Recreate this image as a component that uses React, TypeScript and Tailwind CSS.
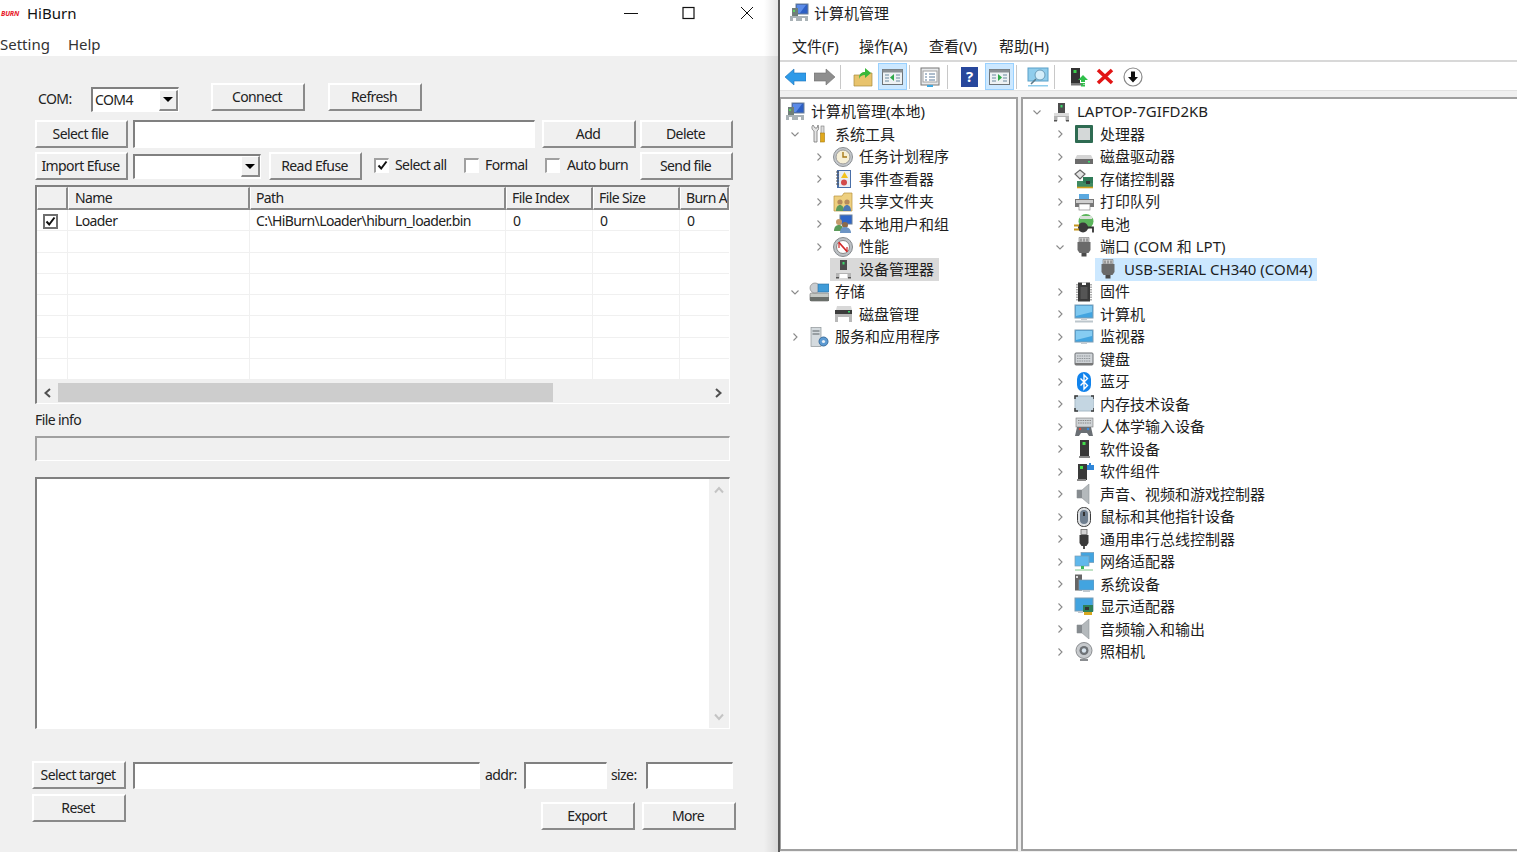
import { ReactNode } from "react";

function Btn({ className, children }: { className: string; children: ReactNode }) {
  return (
    <div
      className={`flex h-[28px] shrink-0 items-center justify-center border-t-2 border-l-2 border-b-2 border-r-2 border-t-white border-l-white border-b-[#8a8a8a] border-r-[#8a8a8a] bg-[#f0f0f0] pr-[2px] pb-[1px] ${className}`}
    >
      {children}
    </div>
  );
}

function Sunken({ className, children }: { className: string; children?: ReactNode }) {
  return (
    <div
      className={`shrink-0 border-t-2 border-l-2 border-b border-r border-t-[#808080] border-l-[#808080] border-b-white border-r-white ${className}`}
    >
      {children}
    </div>
  );
}

function Combo({ className, value }: { className: string; value?: string }) {
  return (
    <Sunken className={`flex h-[25px] items-center justify-between bg-white pl-[2px] ${className}`}>
      <span className="pb-[1px]">{value}</span>
      <div className="flex h-[21px] w-[19px] items-center justify-center border-t border-l border-b-2 border-r-2 border-t-white border-l-white border-b-[#8a8a8a] border-r-[#8a8a8a] bg-[#f0f0f0]">
        <div className="h-0 w-0 border-x-[5px] border-t-[5px] border-x-transparent border-t-black" />
      </div>
    </Sunken>
  );
}

function Check({ checked }: { checked?: boolean }) {
  return (
    <div className="mb-[2px] flex h-[15px] w-[15px] shrink-0 items-center justify-center border-t-2 border-l-2 border-b border-r border-t-[#a0a0a0] border-l-[#a0a0a0] border-b-white border-r-white bg-white">
      {checked && (
        <svg width="11" height="11" viewBox="0 0 11 11" fill="none" stroke="#111" strokeWidth="2">
          <path d="M1.5 5.5 4.2 8.5 9.5 1.5" />
        </svg>
      )}
    </div>
  );
}

const COLS = "grid grid-cols-[31px_182px_256px_87px_87px_49px]";

function FileTable() {
  return (
    <Sunken className="mt-[5px] ml-[35px] h-[219px] w-[695px] bg-[#f0f0f0]">
      <div className={COLS}>
        {["", "Name", "Path", "File Index", "File Size", "Burn A"].map((h, i) => (
          <div
            key={i}
            className={`flex h-[23px] items-center overflow-hidden border-t border-l border-b-2 border-r-2 border-t-[#f0f0f0] border-l-white border-b-[#8a8a8a] border-r-[#8a8a8a] whitespace-nowrap ${i > 1 ? "pl-[5px]" : "pl-[6px]"}`}
          >
            {h}
          </div>
        ))}
      </div>
      <div className="bg-white">
        <div className={`${COLS} h-[21.3px] border-b border-[#f0f0f0]`}>
          <div className="flex items-center border-r border-[#f0f0f0] pt-[2px] pl-[6px]">
            <div className="flex h-[15px] w-[15px] items-center justify-center border-2 border-[#6e6e6e]">
              <svg width="11" height="11" viewBox="0 0 11 11" fill="none" stroke="#111" strokeWidth="2">
                <path d="M1.5 5.5 4.2 8.5 9.5 1.5" />
              </svg>
            </div>
          </div>
          <div className="flex items-center border-r border-[#f0f0f0] pt-[2px] pl-[7px]">Loader</div>
          <div className="flex items-center border-r border-[#f0f0f0] pt-[2px] pl-[6px] whitespace-nowrap">
            C:\HiBurn\Loader\hiburn_loader.bin
          </div>
          <div className="flex items-center border-r border-[#f0f0f0] pt-[2px] pl-[7px]">0</div>
          <div className="flex items-center border-r border-[#f0f0f0] pt-[2px] pl-[7px]">0</div>
          <div className="flex items-center pt-[2px] pl-[7px]">0</div>
        </div>
        {[0, 1, 2, 3, 4, 5, 6].map((r) => (
          <div key={r} className={`${COLS} h-[21.3px] border-b border-[#f0f0f0]`}>
            <div className="border-r border-[#f0f0f0]" />
            <div className="border-r border-[#f0f0f0]" />
            <div className="border-r border-[#f0f0f0]" />
            <div className="border-r border-[#f0f0f0]" />
            <div className="border-r border-[#f0f0f0]" />
            <div />
          </div>
        ))}
      </div>
      <div className="mt-[3px] flex h-[19px] w-[692px] items-center">
        <div className="flex w-[21px] justify-center">
          <svg width="9" height="10" viewBox="0 0 9 10" fill="none" stroke="#505050" strokeWidth="2">
            <path d="M7 1 2.5 5 7 9" />
          </svg>
        </div>
        <div className="h-[19px] w-[495px] bg-[#cdcdcd]" />
        <div className="flex flex-1 justify-end pr-[6px]">
          <svg width="9" height="10" viewBox="0 0 9 10" fill="none" stroke="#505050" strokeWidth="2">
            <path d="M2 1 6.5 5 2 9" />
          </svg>
        </div>
      </div>
    </Sunken>
  );
}

function HiBurn() {
  return (
    <div className="relative flex h-[852px] w-[778px] shrink-0 flex-col bg-[#f0f0f0] text-[14px] leading-none tracking-[-0.6px] text-[#222]">
      <div className="h-[56px] shrink-0 bg-white text-[15px] tracking-normal text-[#111]">
        <div className="flex h-[26px] items-center">
          <span className="ml-[1px] w-[26px] text-[7px] font-bold italic tracking-[-0.2px] text-[#e8202a]">BURN</span>
          <span>HiBurn</span>
          <div className="ml-auto flex items-center">
            <svg width="14" height="14" viewBox="0 0 14 14" stroke="#111" className="mr-[44px]">
              <path d="M0 7.5h14" />
            </svg>
            <svg width="14" height="14" viewBox="0 0 14 14" stroke="#111" fill="none" strokeWidth="1.2" className="mr-[44px]">
              <rect x="1" y="1.5" width="11" height="11" />
            </svg>
            <svg width="14" height="14" viewBox="0 0 14 14" stroke="#111" className="mr-[24px]">
              <path d="M1 1l12 12M13 1 1 13" />
            </svg>
          </div>
        </div>
        <div className="flex h-[30px] items-center pt-[6px] text-[#333]">
          <span>Setting</span>
          <span className="ml-[18px]">Help</span>
        </div>
      </div>

      <div className="mt-[27px] flex h-[28px] items-start pl-[38px]">
        <span className="mt-[9px] w-[53px]">COM:</span>
        <Combo className="mt-[4px] w-[88px]" value="COM4" />
        <Btn className="ml-[32px] w-[94px]">Connect</Btn>
        <Btn className="ml-[23px] w-[94px]">Refresh</Btn>
      </div>

      <div className="mt-[9px] flex items-center pl-[35px]">
        <Btn className="w-[93px]">Select file</Btn>
        <Sunken className="ml-[5px] h-[28px] w-[402px] bg-white" />
        <Btn className="ml-[7px] w-[94px]">Add</Btn>
        <Btn className="ml-[4px] w-[93px]">Delete</Btn>
      </div>

      <div className="mt-[4px] flex items-center pl-[35px]">
        <Btn className="w-[93px]">Import Efuse</Btn>
        <Combo className="ml-[5px] w-[128px]" />
        <Btn className="ml-[8px] w-[93px]">Read Efuse</Btn>
        <div className="ml-[12px]">
          <Check checked />
        </div>
        <span className="mb-[2px] ml-[6px] w-[69px]">Select all</span>
        <Check />
        <span className="mb-[2px] ml-[6px] w-[60px]">Formal</span>
        <Check />
        <span className="mb-[2px] ml-[7px] w-[67px]">Auto burn</span>
        <Btn className="ml-[6px] w-[93px]">Send file</Btn>
      </div>

      <FileTable />

      <div className="mt-[9px] ml-[35px] h-[23px]">File info</div>
      <Sunken className="ml-[35px] h-[25px] w-[695px] border-t-[#a0a0a0] border-l-[#a0a0a0] bg-[#f0f0f0]" />

      <Sunken className="mt-[16px] ml-[35px] flex h-[252px] w-[695px] justify-end bg-white">
        <div className="flex w-[20px] flex-col items-center justify-between bg-[#f0f0f0] py-[7px]">
          <svg width="10" height="8" viewBox="0 0 10 8" fill="none" stroke="#c4c4c4" strokeWidth="2">
            <path d="M1 6.5 5 2l4 4.5" />
          </svg>
          <svg width="10" height="8" viewBox="0 0 10 8" fill="none" stroke="#c4c4c4" strokeWidth="2">
            <path d="M1 1.5 5 6l4-4.5" />
          </svg>
        </div>
      </Sunken>

      <div className="mt-[32px] flex items-center pl-[32px]">
        <Btn className="w-[94px]">Select target</Btn>
        <Sunken className="ml-[7px] h-[27px] w-[347px] bg-white" />
        <span className="ml-[5px] w-[39px]">addr:</span>
        <Sunken className="h-[27px] w-[83px] bg-white" />
        <span className="ml-[4px] w-[35px]">size:</span>
        <Sunken className="h-[27px] w-[87px] bg-white" />
      </div>

      <div className="mt-[5px] flex items-start pl-[32px]">
        <Btn className="w-[94px]">Reset</Btn>
        <Btn className="mt-[8px] ml-[415px] w-[94px]">Export</Btn>
        <Btn className="mt-[8px] ml-[7px] w-[94px]">More</Btn>
      </div>

      <div className="absolute inset-y-0 right-0 w-[14px] bg-gradient-to-r from-transparent to-black/10" />
    </div>
  );
}

function ServerBase({ children }: { children?: ReactNode }) {
  return (
    <svg width="20" height="20" viewBox="0 0 20 20" className="shrink-0">
      {children}
    </svg>
  );
}

const icons: Record<string, ReactNode> = {
  mgmt: (
    <ServerBase>
      <rect x="7" y="1" width="12" height="10" fill="#2d5fc4" stroke="#6d8098" />
      <path d="M8 2h9l-6 8H8z" fill="#5b8be8" />
      <rect x="3" y="5" width="6" height="9" fill="#6f7f78" />
      <rect x="4" y="7" width="2" height="2" fill="#5fd35f" />
      <rect x="1" y="13" width="18" height="5" fill="#a9b2b6" />
      <rect x="4" y="15" width="3" height="3" fill="#fff" />
      <rect x="13" y="15" width="3" height="3" fill="#fff" />
    </ServerBase>
  ),
  device: (
    <ServerBase>
      <rect x="7" y="1" width="7" height="11" fill="#4c4c4c" />
      <rect x="9.5" y="3" width="2" height="2.5" fill="#38d86a" />
      <path d="M3 11h15v8H3z" fill="#b4b4b4" />
      <rect x="3" y="11" width="15" height="3" fill="#dcdcdc" />
      <rect x="6.5" y="15" width="8" height="4" fill="#fff" />
      <rect x="3" y="18" width="3" height="1.5" fill="#555" />
      <rect x="15" y="18" width="3" height="1.5" fill="#555" />
    </ServerBase>
  ),
  tools: (
    <ServerBase>
      <path d="M4 1c-2 2-1 5 1 6v11h3V7c2-1 2-4 1-6L8 4H6z" fill="#e4e4e4" stroke="#777" strokeWidth=".8" />
      <rect x="12" y="2" width="3" height="8" fill="#ddd" stroke="#777" strokeWidth=".6" />
      <rect x="11.5" y="9" width="4" height="9" fill="#e0a81c" stroke="#a87c0c" strokeWidth=".6" />
    </ServerBase>
  ),
  clock: (
    <ServerBase>
      <circle cx="10" cy="10" r="9.5" fill="#c4c8cc" stroke="#8b8f93" />
      <circle cx="10" cy="10" r="7" fill="#f6efd6" stroke="#9a9a9a" />
      <path d="M10 5V10h4" stroke="#a77a18" strokeWidth="1.4" fill="none" />
    </ServerBase>
  ),
  event: (
    <ServerBase>
      <rect x="4" y="1" width="14" height="18" fill="#4a6fa8" />
      <rect x="6" y="2" width="11" height="16" fill="#e8edf4" />
      <path d="M11.5 3l3.5 6H8z" fill="#f2c21d" />
      <circle cx="11" cy="13.5" r="3" fill="#d24a4a" />
      <path d="M3 3h3M3 6h3M3 9h3M3 12h3M3 15h3" stroke="#555" />
    </ServerBase>
  ),
  shared: (
    <ServerBase>
      <path d="M1 4h8l2-3h8v18H1z" fill="#eed080" stroke="#b8923c" strokeWidth=".7" />
      <circle cx="7" cy="10" r="2.6" fill="#b58b5d" />
      <path d="M3 19c0-4 2-6 4-6s4 2 4 6z" fill="#5c9a5c" />
      <circle cx="14" cy="10" r="2.6" fill="#b58b5d" />
      <path d="M10 19c0-4 2-6 4-6s4 2 4 6z" fill="#4c78b4" />
    </ServerBase>
  ),
  users: (
    <ServerBase>
      <rect x="7" y="1" width="12" height="9" fill="#2f66c8" stroke="#6d8098" />
      <circle cx="6" cy="8" r="3" fill="#c49a6c" />
      <path d="M1 17c0-4 2-6 5-6s4 2 4 6z" fill="#5a9a5a" />
      <circle cx="12" cy="11" r="3" fill="#8d6b4b" />
      <path d="M7 19c0-4 2-6 5-6s6 2 6 6z" fill="#6c94c4" />
    </ServerBase>
  ),
  perf: (
    <ServerBase>
      <circle cx="10" cy="10" r="9.5" fill="#bcc0c4" stroke="#85898d" />
      <circle cx="10" cy="10" r="6.5" fill="#fff" stroke="#888" />
      <path d="M6 5.5l8 9" stroke="#d02828" strokeWidth="1.8" />
      <path d="M6 5v6M14 15v-5" stroke="#d02828" strokeWidth="1.2" />
    </ServerBase>
  ),
  storage: (
    <ServerBase>
      <rect x="1" y="11" width="19" height="8" rx="1.5" fill="#c5c9c4" stroke="#777" strokeWidth=".7" />
      <rect x="1" y="15" width="19" height="4" fill="#6a6f6a" />
      <circle cx="6" cy="6" r="5" fill="#c8ccd0" stroke="#888" strokeWidth=".7" />
      <rect x="9" y="2" width="11" height="8" fill="#3f9bd8" stroke="#2a6f9e" strokeWidth=".6" />
    </ServerBase>
  ),
  disk: (
    <ServerBase>
      <path d="M4 2h14l1 4H3z" fill="#d8d8d8" />
      <rect x="2" y="6" width="17" height="4" fill="#3c3c3c" />
      <rect x="15" y="7" width="2" height="1.5" fill="#37d66a" />
      <rect x="2" y="10" width="17" height="8" fill="#b8b8b8" />
      <rect x="5" y="13" width="11" height="5" fill="#fff" />
    </ServerBase>
  ),
  services: (
    <ServerBase>
      <rect x="2" y="0.5" width="10" height="19" fill="#d4dade" stroke="#8d9498" strokeWidth=".7" />
      <path d="M3.5 4h7M3.5 7h7" stroke="#5a6266" />
      <circle cx="14.5" cy="14.5" r="4.5" fill="#5c9ad2" stroke="#3a6e9e" />
      <circle cx="14.5" cy="14.5" r="1.6" fill="#e8eef4" />
    </ServerBase>
  ),
  cpu: (
    <ServerBase>
      <rect x="1" y="1" width="18" height="18" rx="1" fill="#2e6b52" />
      <rect x="4" y="4" width="12" height="12" fill="#d4d8d8" />
    </ServerBase>
  ),
  hdd: (
    <ServerBase>
      <path d="M3 8h14l2 4H1z" fill="#d5d5d5" />
      <rect x="1" y="12" width="18" height="5" fill="#6b6b6b" />
      <rect x="14" y="14" width="2" height="1.5" fill="#3adf6e" />
    </ServerBase>
  ),
  ctrl: (
    <ServerBase>
      <path d="M6 1l5 4-5 5-5-5z" fill="#e4e4e4" stroke="#666" strokeWidth="1.2" />
      <path d="M3 12h16v6H3z" fill="#3f8a62" />
      <rect x="9" y="8" width="10" height="6" fill="#2f7b58" />
      <rect x="12" y="12" width="4" height="3" fill="#333" />
      <path d="M3 18.5h16" stroke="#d0a020" strokeWidth="1.6" />
    </ServerBase>
  ),
  printer: (
    <ServerBase>
      <rect x="5" y="2" width="10" height="5" fill="#5aa9e0" />
      <path d="M1 7h19v8H1z" fill="#777" />
      <rect x="2" y="8" width="17" height="3" fill="#cfcfcf" />
      <rect x="5" y="12" width="11" height="6" fill="#fff" stroke="#888" strokeWidth=".7" />
    </ServerBase>
  ),
  battery: (
    <ServerBase>
      <circle cx="12" cy="7.5" r="7.5" fill="#5cb55c" />
      <path d="M6 2h12v3H6z" fill="#d8e0d8" />
      <circle cx="9" cy="13.5" r="5" fill="#3a3a3a" />
      <path d="M0 11.5h5M0 15.5h5" stroke="#c4961e" strokeWidth="1.8" />
      <path d="M13 13.5h6v5" stroke="#333" strokeWidth="1.8" fill="none" />
    </ServerBase>
  ),
  port: (
    <ServerBase>
      <path d="M5 0.5h10v4.5H5z" fill="#cfcfcf" stroke="#777" strokeWidth=".6" />
      <path d="M7 1.5v3M10 1.5v3M13 1.5v3" stroke="#666" />
      <path d="M3.5 5h13v8l-2 3h-9l-2-3z" fill="#6a6a6a" />
      <rect x="7.5" y="16" width="5" height="3.5" fill="#4a4a4a" />
    </ServerBase>
  ),
  firmware: (
    <ServerBase>
      <rect x="4" y="0.5" width="12" height="19" fill="#3a3a3a" />
      <path d="M8 0.5h4v2.5H8z" fill="#fff" />
      <rect x="6.5" y="5" width="7" height="12" fill="#555" />
      <path d="M3 2v17M17 2v17" stroke="#999" strokeWidth="1.6" strokeDasharray="1.5 1" />
    </ServerBase>
  ),
  computer: (
    <ServerBase>
      <rect x="1" y="1" width="18" height="13" fill="#42a4e0" stroke="#7a9cb4" />
      <path d="M2 2h16v6L2 12z" fill="#7ec8f0" />
      <rect x="7" y="14" width="6" height="2" fill="#c4ccd2" />
      <rect x="1" y="16.5" width="18" height="2" fill="#bcc6cc" />
    </ServerBase>
  ),
  monitor: (
    <ServerBase>
      <rect x="1" y="3" width="18" height="12" fill="#42a4e0" stroke="#7a9cb4" />
      <path d="M2 4h16v5L2 13z" fill="#86ccf2" />
      <rect x="7" y="15" width="6" height="2" fill="#c4ccd2" />
    </ServerBase>
  ),
  keyboard: (
    <ServerBase>
      <rect x="1" y="4" width="18" height="12" rx="1" fill="#d0d4d8" stroke="#6c7074" />
      <path d="M3 7h14M3 9.5h14M3 12h14" stroke="#8f9498" strokeDasharray="1.5 .8" />
      <rect x="1" y="14" width="18" height="2" fill="#777" />
    </ServerBase>
  ),
  bluetooth: (
    <ServerBase>
      <rect x="3" y="0" width="14" height="20" rx="7" fill="#1183ec" />
      <path d="M6.5 6.5l7 7-3.5 3.5V3l3.5 3.5-7 7" fill="none" stroke="#fff" strokeWidth="1.4" />
    </ServerBase>
  ),
  memory: (
    <ServerBase>
      <rect x="1" y="2" width="19" height="15" fill="#c4d6e2" stroke="#a8bac6" />
      <path d="M1 5V2h3M17 2h3v3M1 14v3h3M17 17h3v-3" stroke="#3c3c3c" fill="none" strokeWidth="1.5" />
    </ServerBase>
  ),
  hid: (
    <ServerBase>
      <rect x="2" y="1" width="17" height="9" fill="#cfd3d6" stroke="#777" strokeWidth=".6" />
      <path d="M4 3.5h13M4 6h13" stroke="#888" strokeDasharray="1.5 .8" />
      <path d="M1 19l2-9h14l2 9h-4l-2-3H7l-2 3z" fill="#6a6f74" />
      <circle cx="6" cy="12" r="1.2" fill="#e04a3a" />
      <circle cx="14" cy="12" r="1.2" fill="#3a8ae0" />
    </ServerBase>
  ),
  softdev: (
    <ServerBase>
      <rect x="6" y="1" width="9" height="16" fill="#3a3a3a" />
      <rect x="8.5" y="3" width="3" height="3" fill="#42e04a" />
      <rect x="5" y="17" width="11" height="2" fill="#888" />
    </ServerBase>
  ),
  softcomp: (
    <ServerBase>
      <rect x="4" y="2" width="9" height="16" fill="#3a3a3a" />
      <rect x="6" y="4" width="3" height="3" fill="#42e04a" />
      <rect x="3" y="17" width="9" height="2" fill="#888" />
      <path d="M13 3h2V1h2v2h3v5h-7z" fill="#2f86d8" />
    </ServerBase>
  ),
  sound: (
    <ServerBase>
      <path d="M3 6h5l7-6v20l-7-6H3z" fill="#b4b9bc" stroke="#8f9498" strokeWidth=".6" />
      <path d="M3 6h5v8H3z" fill="#868b8f" />
    </ServerBase>
  ),
  mouse: (
    <ServerBase>
      <rect x="3.5" y="0.5" width="13" height="19" rx="6" fill="#dde0e3" stroke="#3c3c3c" />
      <rect x="6" y="3" width="8" height="14" rx="4" fill="#6f7f90" />
      <rect x="9" y="5" width="2" height="4" fill="#333" />
    </ServerBase>
  ),
  usb: (
    <ServerBase>
      <rect x="7" y="0.5" width="6" height="5" fill="#d4d4d4" stroke="#666" strokeWidth=".8" />
      <path d="M5.5 6h9v8l-2 3h-5l-2-3z" fill="#3a3a3a" />
      <rect x="9" y="17" width="2" height="3" fill="#555" />
    </ServerBase>
  ),
  network: (
    <ServerBase>
      <rect x="7" y="0.5" width="13" height="10" fill="#42a4e0" stroke="#7a9cb4" strokeWidth=".7" />
      <rect x="1" y="4" width="14" height="10" fill="#60b8ec" stroke="#7a9cb4" strokeWidth=".7" />
      <rect x="7" y="14" width="3" height="3" fill="#3ab85c" />
      <rect x="1" y="17" width="18" height="2" fill="#bfe2c4" />
    </ServerBase>
  ),
  system: (
    <ServerBase>
      <rect x="1" y="0.5" width="7" height="16" fill="#666" />
      <rect x="2" y="2" width="2" height="2" fill="#ddd" />
      <rect x="5" y="6" width="15" height="10" fill="#42a4e0" stroke="#7a9cb4" strokeWidth=".7" />
      <rect x="9" y="16" width="7" height="2" fill="#c0c8ce" />
    </ServerBase>
  ),
  display: (
    <ServerBase>
      <rect x="1" y="1" width="18" height="13" fill="#42a4e0" stroke="#7a9cb4" />
      <rect x="9" y="8" width="10" height="7" fill="#2f8058" />
      <rect x="11" y="10" width="4" height="3" fill="#333" />
      <rect x="10" y="15" width="8" height="3" fill="#d8a820" />
      <rect x="4" y="14" width="5" height="2" fill="#c0c8ce" />
    </ServerBase>
  ),
  camera: (
    <ServerBase>
      <circle cx="10" cy="8.5" r="8" fill="#c7cacd" stroke="#8a8d90" />
      <circle cx="10" cy="8.5" r="4.5" fill="#6e7276" />
      <circle cx="10" cy="8.5" r="2.2" fill="#d8e4ee" />
      <rect x="6" y="17" width="8" height="2" fill="#8a8d90" />
    </ServerBase>
  ),
};

function Chevron({ open }: { open?: boolean }) {
  return (
    <svg width="10" height="10" viewBox="0 0 10 10" fill="none" stroke="#8a8a8a" strokeWidth="1.1" className="shrink-0">
      <path d={open ? "M1.5 3.5 5 7l3.5-3.5" : "M3.5 1.5 7 5 3.5 8.5"} />
    </svg>
  );
}

type Node = { label: string; icon: string; indent: string; chevron?: "open" | "closed"; selected?: string };

const leftTree: Node[] = [
  { label: "计算机管理(本地)", icon: "mgmt", indent: "ml-[-15px]" },
  { label: "系统工具", icon: "tools", indent: "ml-[9px]", chevron: "open" },
  { label: "任务计划程序", icon: "clock", indent: "ml-[33px]", chevron: "closed" },
  { label: "事件查看器", icon: "event", indent: "ml-[33px]", chevron: "closed" },
  { label: "共享文件夹", icon: "shared", indent: "ml-[33px]", chevron: "closed" },
  { label: "本地用户和组", icon: "users", indent: "ml-[33px]", chevron: "closed" },
  { label: "性能", icon: "perf", indent: "ml-[33px]", chevron: "closed" },
  { label: "设备管理器", icon: "device", indent: "ml-[33px]", selected: "bg-[#d9d9d9]" },
  { label: "存储", icon: "storage", indent: "ml-[9px]", chevron: "open" },
  { label: "磁盘管理", icon: "disk", indent: "ml-[33px]" },
  { label: "服务和应用程序", icon: "services", indent: "ml-[9px]", chevron: "closed" },
];

const rightTree: Node[] = [
  { label: "LAPTOP-7GIFD2KB", icon: "device", indent: "ml-[9px]", chevron: "open" },
  { label: "处理器", icon: "cpu", indent: "ml-[32px]", chevron: "closed" },
  { label: "磁盘驱动器", icon: "hdd", indent: "ml-[32px]", chevron: "closed" },
  { label: "存储控制器", icon: "ctrl", indent: "ml-[32px]", chevron: "closed" },
  { label: "打印队列", icon: "printer", indent: "ml-[32px]", chevron: "closed" },
  { label: "电池", icon: "battery", indent: "ml-[32px]", chevron: "closed" },
  { label: "端口 (COM 和 LPT)", icon: "port", indent: "ml-[32px]", chevron: "open" },
  { label: "USB-SERIAL CH340 (COM4)", icon: "port", indent: "ml-[56px]", selected: "bg-[#cce8ff]" },
  { label: "固件", icon: "firmware", indent: "ml-[32px]", chevron: "closed" },
  { label: "计算机", icon: "computer", indent: "ml-[32px]", chevron: "closed" },
  { label: "监视器", icon: "monitor", indent: "ml-[32px]", chevron: "closed" },
  { label: "键盘", icon: "keyboard", indent: "ml-[32px]", chevron: "closed" },
  { label: "蓝牙", icon: "bluetooth", indent: "ml-[32px]", chevron: "closed" },
  { label: "内存技术设备", icon: "memory", indent: "ml-[32px]", chevron: "closed" },
  { label: "人体学输入设备", icon: "hid", indent: "ml-[32px]", chevron: "closed" },
  { label: "软件设备", icon: "softdev", indent: "ml-[32px]", chevron: "closed" },
  { label: "软件组件", icon: "softcomp", indent: "ml-[32px]", chevron: "closed" },
  { label: "声音、视频和游戏控制器", icon: "sound", indent: "ml-[32px]", chevron: "closed" },
  { label: "鼠标和其他指针设备", icon: "mouse", indent: "ml-[32px]", chevron: "closed" },
  { label: "通用串行总线控制器", icon: "usb", indent: "ml-[32px]", chevron: "closed" },
  { label: "网络适配器", icon: "network", indent: "ml-[32px]", chevron: "closed" },
  { label: "系统设备", icon: "system", indent: "ml-[32px]", chevron: "closed" },
  { label: "显示适配器", icon: "display", indent: "ml-[32px]", chevron: "closed" },
  { label: "音频输入和输出", icon: "sound", indent: "ml-[32px]", chevron: "closed" },
  { label: "照相机", icon: "camera", indent: "ml-[32px]", chevron: "closed" },
];

function Tree({ nodes }: { nodes: Node[] }) {
  return (
    <div className="flex flex-col pt-[1.6px]">
      {nodes.map((n) => (
        <div key={n.label} className="flex h-[22.5px] items-center">
          <div className={`flex w-[10px] shrink-0 justify-center ${n.indent}`}>
            {n.chevron && <Chevron open={n.chevron === "open"} />}
          </div>
          <div className={`ml-[6px] flex h-[23px] items-center pr-[5px] pl-[3px] ${n.selected ?? ""}`}>
            {icons[n.icon]}
            <span className="ml-[6px] whitespace-nowrap">{n.label}</span>
          </div>
        </div>
      ))}
    </div>
  );
}

function ToolSep({ className }: { className: string }) {
  return <div className={`h-[24px] w-px shrink-0 bg-[#c8c8c8] ${className}`} />;
}

function Toolbar() {
  return (
    <div className="flex h-[30px] shrink-0 items-center border-t-2 border-[#d8d8d8] bg-white pt-[1px] pl-[5px]">
      <svg width="21" height="18" viewBox="0 0 21 18" className="shrink-0">
        <path d="M0 9 9 1v4h12v8H9v4z" fill="#2e9ae8" stroke="#1c72b8" strokeWidth=".6" />
      </svg>
      <svg width="21" height="18" viewBox="0 0 21 18" className="ml-[8px] shrink-0">
        <path d="M21 9 12 1v4H0v8h12v4z" fill="#8e8e8e" stroke="#6e6e6e" strokeWidth=".6" />
      </svg>
      <ToolSep className="ml-[5px]" />
      <svg width="20" height="20" viewBox="0 0 20 20" className="ml-[12px] shrink-0">
        <path d="M1 8h6l2-2h10v13H1z" fill="#e8c36c" stroke="#a88a3c" strokeWidth=".7" />
        <path d="M6 12c0-5 2-7 6-7V1l6 5-6 5V8c-3 0-5 1-6 4z" fill="#3ab83a" />
      </svg>
      <div className="ml-[5px] flex h-[27px] w-[29px] shrink-0 items-center justify-center border border-[#99d1ff] bg-[#cce8ff]">
        <svg width="21" height="16" viewBox="0 0 21 16">
          <rect x=".5" y=".5" width="20" height="15" fill="#eef2f4" stroke="#6e7478" />
          <rect x=".5" y=".5" width="20" height="3" fill="#8a9094" />
          <path d="M3 6h4M3 9h4M3 12h4M14 6h4M14 9h4M14 12h4" stroke="#6a8aa0" />
          <path d="M12 5v7L8 8.5z" fill="#2faa4a" />
        </svg>
      </div>
      <ToolSep className="ml-[2px]" />
      <svg width="20" height="20" viewBox="0 0 20 20" className="ml-[10px] shrink-0">
        <rect x="1" y="1" width="18" height="17" fill="#e8eaec" stroke="#777" />
        <rect x="3" y="4" width="14" height="11" fill="#fff" stroke="#a0a0a0" />
        <path d="M5 7h2M9 7h6M5 10h2M9 10h6M5 13h2M9 13h6" stroke="#5a7a9a" />
        <rect x="7" y="18" width="6" height="2" fill="#3ea8e0" />
      </svg>
      <ToolSep className="ml-[7px]" />
      <div className="ml-[13px] flex h-[20px] w-[17px] shrink-0 items-center justify-center bg-[#27479c] text-[15px] font-bold text-white">
        ?
      </div>
      <div className="ml-[7px] flex h-[27px] w-[29px] shrink-0 items-center justify-center border border-[#99d1ff] bg-[#cce8ff]">
        <svg width="21" height="16" viewBox="0 0 21 16">
          <rect x=".5" y=".5" width="20" height="15" fill="#eef2f4" stroke="#6e7478" />
          <rect x=".5" y=".5" width="20" height="3" fill="#8a9094" />
          <path d="M3 6h4M3 9h4M3 12h4M14 6h4M14 9h4M14 12h4" stroke="#6a8aa0" />
          <path d="M9 5v7l4-3.5z" fill="#2faa4a" />
        </svg>
      </div>
      <ToolSep className="ml-[2px]" />
      <svg width="22" height="20" viewBox="0 0 22 20" className="ml-[10px] shrink-0">
        <rect x="1" y="1" width="20" height="13" fill="#8fcdec" stroke="#5aa0c8" />
        <circle cx="13" cy="8" r="5" fill="#d4eefa" stroke="#6a9cb8" />
        <path d="M9 12l-5 5" stroke="#5a7a8a" strokeWidth="1.6" />
        <rect x="1" y="18" width="20" height="1.5" fill="#8fcdec" />
      </svg>
      <ToolSep className="ml-[5px]" />
      <svg width="18" height="20" viewBox="0 0 18 20" className="ml-[15px] shrink-0">
        <rect x="1" y="1" width="9" height="15" fill="#333" />
        <rect x="3.5" y="3" width="3" height="3" fill="#3ad04a" />
        <rect x="1" y="16" width="12" height="2.5" fill="#777" />
        <path d="M13 8l5 5h-3v2h-4v-2H8z" fill="#2fc04a" />
        <rect x="11" y="16" width="4" height="1.5" fill="#2fc04a" />
        <rect x="11" y="18" width="4" height="1.5" fill="#2fc04a" />
      </svg>
      <svg width="18" height="17" viewBox="0 0 18 17" className="ml-[8px] shrink-0">
        <path d="M2 2l14 13M16 2 2 15" stroke="#e21414" strokeWidth="3.6" />
      </svg>
      <svg width="20" height="20" viewBox="0 0 20 20" className="ml-[9px] shrink-0">
        <circle cx="10" cy="10" r="9" fill="#fff" stroke="#8a8a8a" strokeWidth="1.2" />
        <path d="M8 4.5h4V10h3l-5 5.5L5 10h3z" fill="#111" />
      </svg>
    </div>
  );
}

function ComputerManagement() {
  return (
    <div className="flex h-[852px] min-w-0 flex-1 flex-col border-l-2 border-[#5a5a5a] bg-white text-[15px] leading-none text-[#1e1e1e]">
      <div className="flex h-[26px] shrink-0 items-center pl-[9px]">
        {icons.mgmt}
        <span className="ml-[5px]">计算机管理</span>
      </div>
      <div className="flex h-[34px] shrink-0 items-center pt-[7px] pl-[12px]">
        <span className="w-[67px]">文件(F)</span>
        <span className="w-[70px]">操作(A)</span>
        <span className="w-[70px]">查看(V)</span>
        <span>帮助(H)</span>
      </div>
      <Toolbar />
      <div className="flex min-h-0 flex-1 gap-[3px] border-t border-[#e2e2e2] bg-[#f0f0f0] pt-[6px] pb-[1px]">
        <div className="w-[238px] shrink-0 border-t-2 border-r-2 border-b-2 border-l border-[#a0a0a0] bg-white">
          <Tree nodes={leftTree} />
        </div>
        <div className="min-w-0 flex-1 border-t-2 border-b-2 border-l-2 border-[#a0a0a0] bg-white">
          <Tree nodes={rightTree} />
        </div>
      </div>
    </div>
  );
}

export default function App() {
  return (
    <div className="flex h-[852px] w-[1517px] overflow-hidden [font-family:'Noto_Sans','Noto_Sans_CJK_SC',sans-serif]">
      <HiBurn />
      <ComputerManagement />
    </div>
  );
}
